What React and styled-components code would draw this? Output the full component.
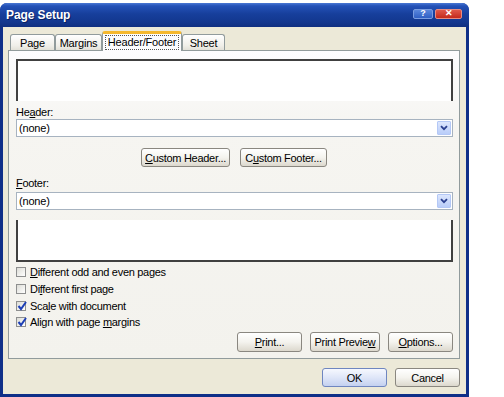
import React from "react";
import styled, { createGlobalStyle } from "styled-components";

const GlobalStyle = createGlobalStyle`
  html, body {
    margin: 0;
    padding: 0;
    background: #fff;
  }
  body {
    font-family: "Liberation Sans", Arial, sans-serif;
    font-size: 11px;
    color: #000;
  }
`;

const Screen = styled.div`
  width: 504px;
  height: 397px;
  padding-top: 3px;
  box-sizing: border-box;
  background: #fff;
  overflow: hidden;
`;

const Window = styled.div`
  width: 469px;
  height: 394px;
  display: flex;
  flex-direction: column;
  background: #0f2f88;
  border-radius: 7px 7px 0 0;
`;

const TitleBar = styled.div`
  height: 24px;
  flex: none;
  display: flex;
  align-items: center;
  padding: 0 6px 0 6px;
  border-radius: 7px 7px 0 0;
  background: linear-gradient(
    #4a78d4 0%,
    #2452b8 12%,
    #173f9c 45%,
    #13378e 80%,
    #0f2f80 100%
  );
`;

const Title = styled.span`
  flex: 1;
  color: #fff;
  font-weight: bold;
  font-size: 12px;
  letter-spacing: -0.1px;
  text-shadow: 1px 1px 0 #0a2060;
`;

const CaptionButtons = styled.div`
  display: flex;
  gap: 2px;
  margin-right: 1px;
  margin-top: -3px;
`;

const CaptionButton = styled.div`
  width: ${(p) => p.$w}px;
  height: 10px;
  border-radius: 2px;
  display: flex;
  align-items: center;
  justify-content: center;
  border: 1px solid ${(p) => (p.$close ? "#e88a80" : "#7a9ce0")};
  box-sizing: border-box;
  background: ${(p) =>
    p.$close
      ? "linear-gradient(#e0584a, #c42a1c)"
      : "linear-gradient(#5a86dc, #2f5fc4)"};
  color: #fff;
  font-weight: bold;
  font-size: 9px;
  line-height: 1;
`;

const Body = styled.div`
  flex: 1;
  margin: 0 3px 3px 3px;
  background: #ece9d8;
  display: flex;
  flex-direction: column;
`;

const TabRow = styled.div`
  height: 23px;
  flex: none;
  display: flex;
  align-items: flex-end;
  padding-left: 7px;
  box-sizing: border-box;
  position: relative;
  z-index: 1;
`;

const Tab = styled.div`
  width: ${(p) => p.$w}px;
  height: ${(p) => (p.$active ? 20 : 16)}px;
  margin-bottom: ${(p) => (p.$active ? -1 : 0)}px;
  box-sizing: border-box;
  display: flex;
  align-items: center;
  justify-content: center;
  border: 1px solid #919b9c;
  border-bottom: none;
  border-top: ${(p) => (p.$active ? "3px solid #f5b82e" : "1px solid #919b9c")};
  border-radius: 3px 3px 0 0;
  background: ${(p) =>
    p.$active ? "#fcfcfe" : "linear-gradient(#ffffff, #f0efe9 70%, #e3e1d8)"};
  letter-spacing: -0.2px;
  padding-top: ${(p) => (p.$active ? 0 : 1)}px;
`;

const FocusText = styled.span`
  border: 1px dotted #555;
  padding: 0 2px 1px 2px;
`;

const Panel = styled.div`
  height: 309px;
  flex: none;
  margin: 0 6px 0 5px;
  box-sizing: border-box;
  border: 1px solid #919b9c;
  padding: 8px 6px 0 7px;
  background: linear-gradient(#fcfcfe 0%, #f6f5f1 25%, #f3f2ed 100%);
  display: flex;
  flex-direction: column;
`;

const PreviewBox = styled.div`
  height: 42px;
  flex: none;
  box-sizing: border-box;
  background: #fff;
  border: 2px solid #404040;
  ${(p) => (p.$footer ? "border-top: none;" : "border-bottom: none;")}
  margin-top: ${(p) => p.$mt || 0}px;
`;

const FieldLabel = styled.div`
  height: 13px;
  flex: none;
  line-height: 13px;
  margin-top: ${(p) => p.$mt}px;
  letter-spacing: -0.3px;
`;

const Select = styled.div`
  height: 18px;
  flex: none;
  margin-top: ${(p) => p.$mt || 0}px;
  box-sizing: border-box;
  border: 1px solid #a7b3c0;
  background: #fff;
  display: flex;
  align-items: center;
  padding: 0 1px 0 2px;
`;

const SelectValue = styled.span`
  flex: 1;
  letter-spacing: -0.2px;
`;

const ArrowButton = styled.div`
  width: 14px;
  height: 14px;
  box-sizing: border-box;
  border: 1px solid #b4c8f6;
  border-radius: 1px;
  background: linear-gradient(#dce6fd, #b9cdf9);
  display: flex;
  align-items: center;
  justify-content: center;
`;

const CenterRow = styled.div`
  display: flex;
  flex: none;
  justify-content: center;
  gap: 10px;
  margin-top: 11px;
  padding-right: 1px;
`;

const Button = styled.div`
  width: ${(p) => p.$w}px;
  height: ${(p) => p.$h || 19}px;
  box-sizing: border-box;
  display: flex;
  align-items: center;
  justify-content: center;
  border: 1px solid ${(p) => (p.$default ? "#6f86c0" : "#8a8780")};
  border-radius: 3px;
  background: ${(p) =>
    p.$default
      ? "linear-gradient(#f6f8fe, #dfe6f8 50%, #c4d1f0)"
      : "linear-gradient(#ffffff, #f4f3ee 50%, #dcd8cd)"};
  letter-spacing: -0.3px;
  white-space: nowrap;
`;

const Key = styled.span`
  text-decoration: underline;
`;

const CheckList = styled.div`
  margin-top: 2px;
  flex: none;
  display: flex;
  flex-direction: column;
`;

const CheckRow = styled.div`
  height: 16.7px;
  display: flex;
  align-items: center;
  gap: 4px;
  letter-spacing: -0.3px;
`;

const Box = styled.div`
  width: 10px;
  height: 10px;
  flex: none;
  box-sizing: border-box;
  border: 1px solid #8e8f8f;
  background: linear-gradient(135deg, #dcdcd6, #ffffff);
  position: relative;
`;

const CheckMark = styled.svg`
  position: absolute;
  left: 0px;
  top: -1px;
`;

const ActionRow = styled.div`
  display: flex;
  flex: none;
  justify-content: flex-end;
  gap: 8px;
  margin-top: 1px;
`;

const DialogRow = styled.div`
  display: flex;
  justify-content: flex-end;
  gap: 8px;
  margin: 9px 6px 0 0;
`;

const Chevron = () => (
  <svg width="8" height="6" viewBox="0 0 8 6">
    <path d="M1 1.2 L4 4.2 L7 1.2" fill="none" stroke="#2a3f8f" strokeWidth="1.8" />
  </svg>
);

const Check = ({ on, children }) => (
  <CheckRow>
    <Box>
      {on && (
        <CheckMark width="10" height="11" viewBox="0 0 10 11">
          <path d="M1.5 5 L4 8 L9 1" fill="none" stroke="#1d3fb6" strokeWidth="2" />
        </CheckMark>
      )}
    </Box>
    <span>{children}</span>
  </CheckRow>
);

export default function App() {
  return (
    <Screen>
      <GlobalStyle />
      <Window>
        <TitleBar>
          <Title>Page Setup</Title>
          <CaptionButtons>
            <CaptionButton $w={20}>?</CaptionButton>
            <CaptionButton $w={27} $close>
              ✕
            </CaptionButton>
          </CaptionButtons>
        </TitleBar>
        <Body>
          <TabRow>
            <Tab $w={45}>Page</Tab>
            <Tab $w={47}>Margins</Tab>
            <Tab $w={80} $active>
              <FocusText>Header/Footer</FocusText>
            </Tab>
            <Tab $w={43}>Sheet</Tab>
          </TabRow>
          <Panel>
            <PreviewBox />
            <FieldLabel $mt={5}>
              He<Key>a</Key>der:
            </FieldLabel>
            <Select>
              <SelectValue>(none)</SelectValue>
              <ArrowButton>
                <Chevron />
              </ArrowButton>
            </Select>
            <CenterRow>
              <Button $w={89}>
                <Key>C</Key>ustom Header...
              </Button>
              <Button $w={87}>
                C<Key>u</Key>stom Footer...
              </Button>
            </CenterRow>
            <FieldLabel $mt={10}>
              <Key>F</Key>ooter:
            </FieldLabel>
            <Select $mt={2}>
              <SelectValue>(none)</SelectValue>
              <ArrowButton>
                <Chevron />
              </ArrowButton>
            </Select>
            <PreviewBox $footer $mt={10} />
            <CheckList>
              <Check>
                <Key>D</Key>ifferent odd and even pages
              </Check>
              <Check>
                Di<Key>f</Key>ferent first page
              </Check>
              <Check on>
                Sca<Key>l</Key>e with document
              </Check>
              <Check on>
                Align with page <Key>m</Key>argins
              </Check>
            </CheckList>
            <ActionRow>
              <Button $w={65} $h={20}>
                <Key>P</Key>rint...
              </Button>
              <Button $w={70} $h={20}>
                Print Previe<Key>w</Key>
              </Button>
              <Button $w={65} $h={20}>
                <Key>O</Key>ptions...
              </Button>
            </ActionRow>
          </Panel>
          <DialogRow>
            <Button $w={65} $default>
              OK
            </Button>
            <Button $w={65}>Cancel</Button>
          </DialogRow>
        </Body>
      </Window>
    </Screen>
  );
}
